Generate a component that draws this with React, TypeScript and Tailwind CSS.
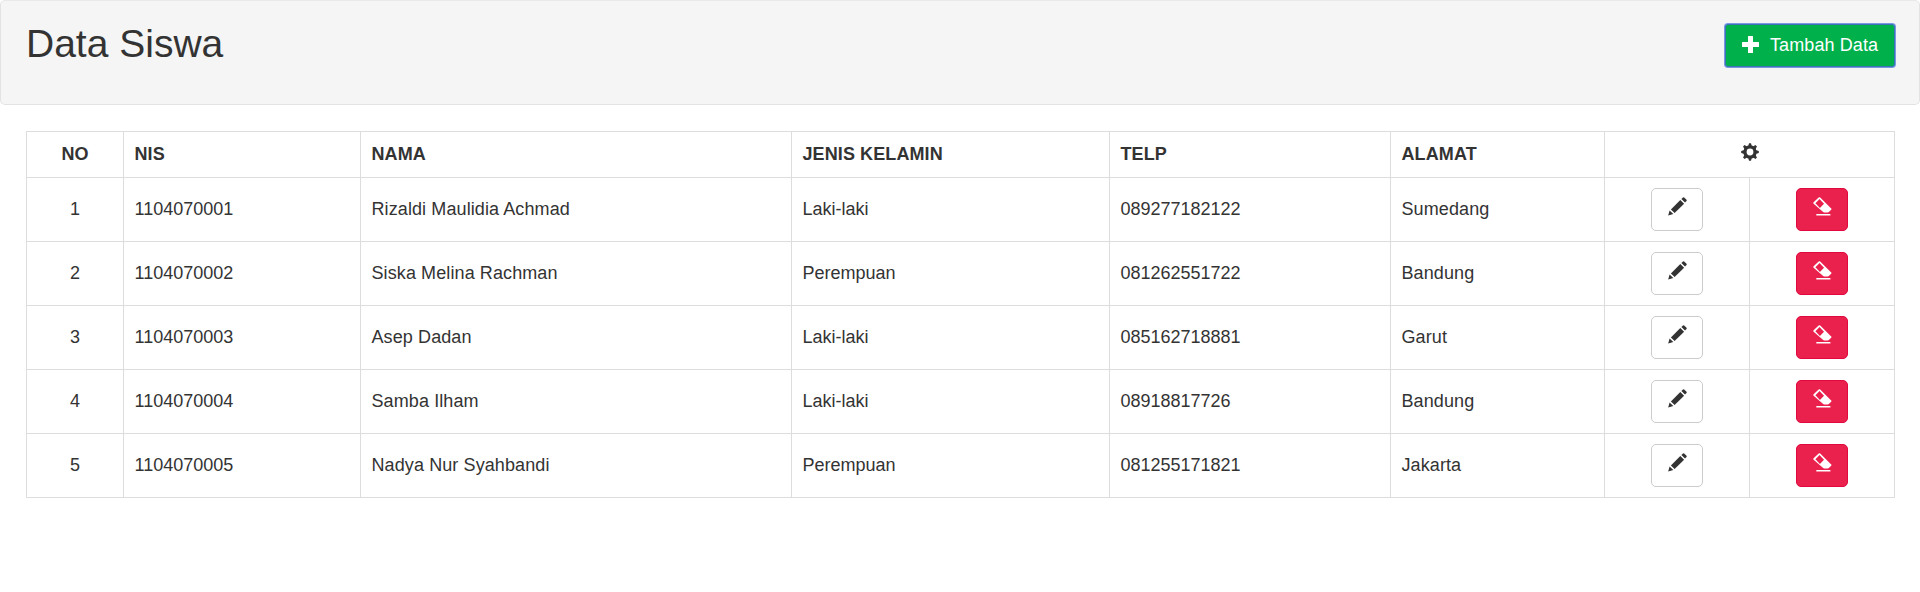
type Student = {
  nis: string;
  name: string;
  gender: string;
  phone: string;
  address: string;
};

const students: Student[] = [
  { nis: "1104070001", name: "Rizaldi Maulidia Achmad", gender: "Laki-laki", phone: "089277182122", address: "Sumedang" },
  { nis: "1104070002", name: "Siska Melina Rachman", gender: "Perempuan", phone: "081262551722", address: "Bandung" },
  { nis: "1104070003", name: "Asep Dadan", gender: "Laki-laki", phone: "085162718881", address: "Garut" },
  { nis: "1104070004", name: "Samba Ilham", gender: "Laki-laki", phone: "08918817726", address: "Bandung" },
  { nis: "1104070005", name: "Nadya Nur Syahbandi", gender: "Perempuan", phone: "081255171821", address: "Jakarta" },
];

const headings = ["NIS", "NAMA", "JENIS KELAMIN", "TELP", "ALAMAT"];
const teeth = [0, 45, 90, 135, 180, 225, 270, 315];

function PlusIcon() {
  return (
    <svg width="17" height="17" viewBox="0 0 17 17" fill="currentColor" className="mb-[3px]" aria-hidden="true">
      <path d="M6.6 0h3.8q.6 0 .6.6V6h5.4q.6 0 .6.6v3.8q0 .6-.6.6H11v5.4q0 .6-.6.6H6.6q-.6 0-.6-.6V11H.6q-.6 0-.6-.6V6.6Q0 6 .6 6H6V.6q0-.6.6-.6z" />
    </svg>
  );
}

function CogIcon() {
  return (
    <svg width="18" height="18" viewBox="0 0 18 18" fill="currentColor" aria-hidden="true">
      <circle cx="9" cy="9" r="5.05" fill="none" stroke="currentColor" strokeWidth="3.3" />
      {teeth.map((angle) => (
        <path key={angle} d="M7.1 3.4 8 .2h2l.9 3.2z" transform={`rotate(${angle} 9 9)`} />
      ))}
    </svg>
  );
}

function PencilIcon() {
  return (
    <svg width="19" height="19" viewBox="0 0 19 19" fill="currentColor" aria-hidden="true">
      <path d="M.2 18.6 1.6 13.4 5.3 17.1z" />
      <path d="M2.9 12.4 12.3 3 16.1 6.7 6.6 16.1z" />
      <path d="M13.4 2 15 .4q.6-.5 1.2 0l2.3 2.3q.5.6 0 1.2L17 5.5z" />
    </svg>
  );
}

function EraserIcon() {
  return (
    <svg width="19" height="19" viewBox="0 0 19 19" fill="currentColor" aria-hidden="true">
      <path fillRule="evenodd" d="M.6 5.3 5.6.5q.8-.6 1.6 0L18.2 11.4q.6.7 0 1.4l-2.4 2.3q-.4.4-1 .4h-3.6q-.6 0-1-.4L.6 6.8q-.5-.8 0-1.5zM2.4 6.2 6.9 10.9 11 6.7 6.5 2.1z" />
      <path d="M3.3 17h14.1v1.5H3.3z" />
    </svg>
  );
}

const cell = "border-r border-b border-[#dddddd] px-[10.5px] py-0 align-middle";

export default function App() {
  return (
    <div className="min-h-[592px] bg-white font-['Liberation_Sans',Arial,sans-serif] text-[18px] leading-[25px] text-[#333333]">
      <header className="flex h-[105px] items-start justify-between rounded-[5px] border border-[#e3e3e3] border-t-[#e9e9e9] bg-[#f5f5f5] pt-[21px] pr-6 pl-[25px]">
        <h1 className="text-[39px] leading-[43px] font-normal">Data Siswa</h1>
        <button className="mt-0.5 flex h-[43px] w-[170px] items-center rounded-[3px] border border-[#3a74b4] bg-[#00b14b] pl-4 text-white shadow-[0_0_0_1px_#7898e4]">
          <PlusIcon />
          <span className="ml-[11px] tracking-[0.1px] whitespace-nowrap">Tambah Data</span>
        </button>
      </header>

      <main className="mt-[26px] pr-[25px] pl-[26px]">
        <table className="w-[1869px] table-fixed border-separate border-spacing-0 border-t border-l border-[#dddddd]">
          <colgroup>
            <col className="w-[97px]" />
            <col className="w-[237px]" />
            <col className="w-[431px]" />
            <col className="w-[318px]" />
            <col className="w-[281px]" />
            <col className="w-[214px]" />
            <col className="w-[145px]" />
            <col className="w-[145px]" />
          </colgroup>
          <thead className="tracking-[0.1px]">
            <tr className="h-[46px]">
              <th className={`${cell} text-center`}>NO</th>
              {headings.map((heading) => (
                <th key={heading} className={`${cell} text-left`}>{heading}</th>
              ))}
              <th colSpan={2} className={cell} aria-label="Aksi">
                <span className="flex justify-center pb-[5px]"><CogIcon /></span>
              </th>
            </tr>
          </thead>
          <tbody>
            {students.map((s, i) => (
              <tr key={s.nis} className="h-16">
                <td className={`${cell} text-center`}>{i + 1}</td>
                <td className={cell}>{s.nis}</td>
                <td className={`${cell} tracking-[0.1px]`}>{s.name}</td>
                <td className={cell}>{s.gender}</td>
                <td className={cell}>{s.phone}</td>
                <td className={`${cell} tracking-[0.1px]`}>{s.address}</td>
                <td className={cell}>
                  <button aria-label="Ubah" className="mx-auto flex h-[43px] w-[52px] items-start justify-center rounded-[5px] border border-[#cccccc] bg-white pt-2">
                    <PencilIcon />
                  </button>
                </td>
                <td className={cell}>
                  <button aria-label="Hapus" className="mx-auto flex h-[43px] w-[52px] items-start justify-center rounded-[5px] border border-[#e0083f] bg-[#ea214d] pt-2 text-white">
                    <EraserIcon />
                  </button>
                </td>
              </tr>
            ))}
          </tbody>
        </table>
      </main>
    </div>
  );
}
